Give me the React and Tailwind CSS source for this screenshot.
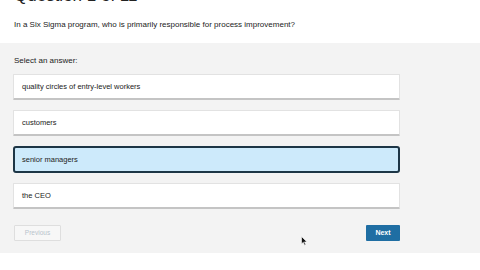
import React, { useState } from "react";

const answers = [
  "quality circles of entry-level workers",
  "customers",
  "senior managers",
  "the CEO",
];

export default function App() {
  const [selected, setSelected] = useState(2);

  return (
    <div className="w-[480px] h-[270px] overflow-hidden bg-white relative" style={{ fontFamily: '"Liberation Sans", Arial, sans-serif' }}>
      {/* Header */}
      <div className="h-[43px] px-[14px] overflow-hidden">
        <h1 className="text-[17px] leading-[20px] -mt-[14px] text-[#222]">Question 1 of 11</h1>
        <p className="text-[8px] leading-[10px] mt-[14px] text-[#222]">
          In a Six Sigma program, who is primarily responsible for process improvement?
        </p>
      </div>

      {/* Answer panel */}
      <div className="bg-[#f3f3f3] h-[210px] px-[13px] pt-[13px]">
        <p className="text-[8px] leading-[10px] text-[#222] pl-[1px]">Select an answer:</p>
        <div className="w-[387px] mt-[8px] flex flex-col gap-[10px]">
          {answers.map((a, i) =>
            i === selected ? (
              <button
                key={a}
                onClick={() => setSelected(i)}
                className="h-[27px] text-left px-[7px] text-[7.5px] text-[#222] bg-[#cdeafb] border-2 border-[#1d3646] rounded-[3px]"
              >
                {a}
              </button>
            ) : (
              <button
                key={a}
                onClick={() => setSelected(i)}
                className="h-[26px] text-left px-[8px] text-[7.5px] text-[#222] bg-white border border-[#e2e2e2] border-b-[#c4c4c4] border-b-2 rounded-[1px]"
              >
                {a}
              </button>
            )
          )}
        </div>

        <div className="w-[387px] mt-[16px] flex justify-between items-center">
          <button className="ml-[1px] w-[47px] h-[16px] text-[6.5px] text-[#b7c3cc] bg-[#f7f7f7] border border-[#dedede] rounded-[1px]">
            Previous
          </button>
          <button className="w-[34px] h-[16px] text-[7px] font-bold text-white bg-[#1f6ea3] rounded-[1px]">
            Next
          </button>
        </div>
      </div>

      {/* Mouse cursor */}
      <svg className="absolute left-[301px] top-[236px]" width="7" height="10" viewBox="0 0 7 10">
        <path d="M0.5 0.5 L0.5 8 L2.3 6.3 L3.6 9.3 L4.8 8.8 L3.5 5.9 L6 5.9 Z" fill="#111" stroke="#fff" strokeWidth="0.6" />
      </svg>
    </div>
  );
}
